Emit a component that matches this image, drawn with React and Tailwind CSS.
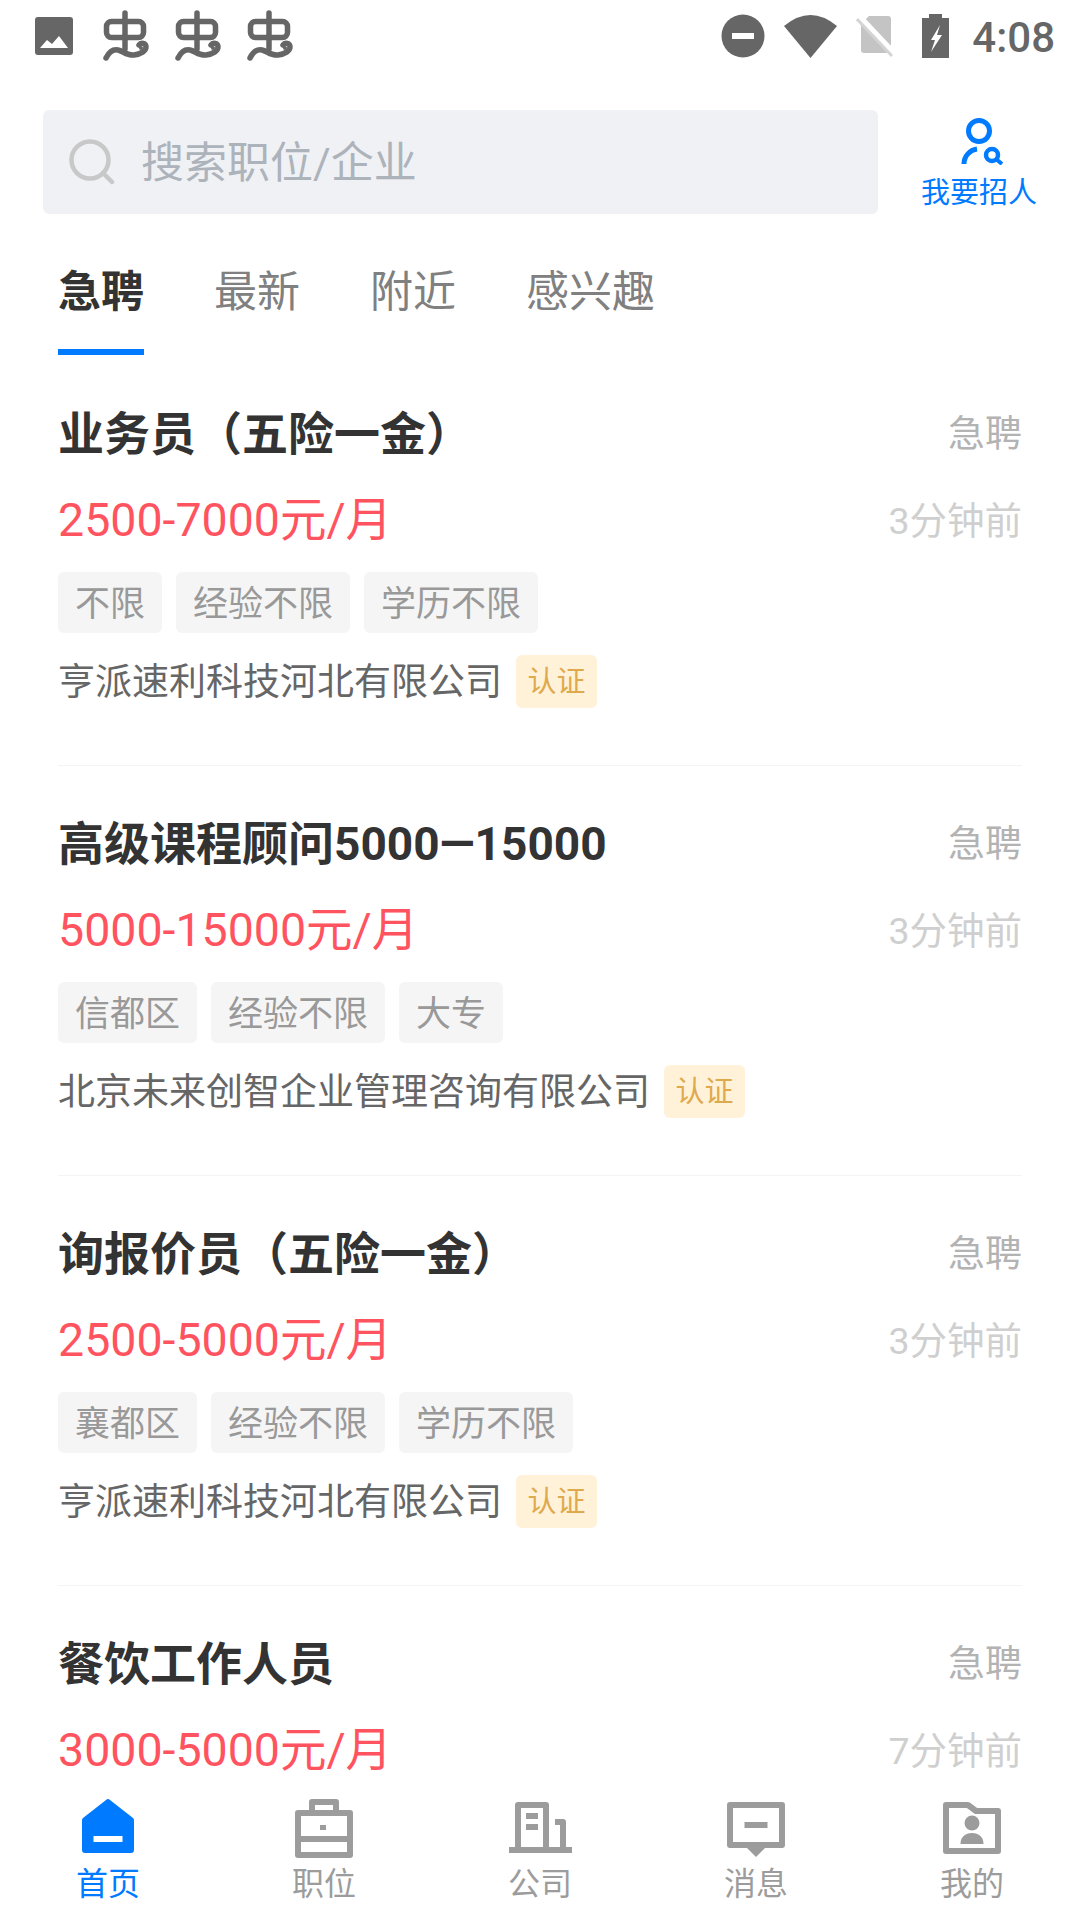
const F = { fontFamily: '"Roboto","Noto Sans CJK SC",sans-serif' };

const jobs = [
  { title: '业务员（五险一金）', salary: '2500-7000元/月', time: '3分钟前', tags: ['不限', '经验不限', '学历不限'], company: '亨派速利科技河北有限公司' },
  { title: '高级课程顾问5000—15000', salary: '5000-15000元/月', time: '3分钟前', tags: ['信都区', '经验不限', '大专'], company: '北京未来创智企业管理咨询有限公司' },
  { title: '询报价员（五险一金）', salary: '2500-5000元/月', time: '3分钟前', tags: ['襄都区', '经验不限', '学历不限'], company: '亨派速利科技河北有限公司' },
  { title: '餐饮工作人员', salary: '3000-5000元/月', time: '7分钟前', tags: [], company: '' },
];

function Bug() {
  return (
    <svg width="46" height="52" viewBox="0 0 46 52" fill="none" stroke="#666" strokeWidth="5.5" strokeLinecap="round">
      <path d="M22 3V39" />
      <rect x="3.5" y="11.5" width="37" height="16" rx="5" />
      <path d="M3 48C6 42 10 39 15 40C20 41 24 46 31 45C38 44 43 41 43 37C43 33 38 32 36 35" />
      <circle cx="38" cy="38" r="2" fill="#666" stroke="none" />
    </svg>
  );
}

function StatusBar() {
  return (
    <div className="h-[72px] shrink-0 flex items-center justify-between pl-[35px] pr-[25px]">
      <div className="flex items-center gap-[30px]">
        <svg width="38" height="38" viewBox="0 0 38 38">
          <rect width="38" height="38" rx="3" fill="#666" />
          <path d="M5 31L12 23L17 27L24 19L33 31Z" fill="#fff" />
        </svg>
        <div className="flex items-center gap-[26px]"><Bug /><Bug /><Bug /></div>
      </div>
      <div className="flex items-center">
        <svg width="44" height="44" viewBox="0 0 44 44" className="mr-[19px]">
          <circle cx="22" cy="22" r="21.5" fill="#666" />
          <rect x="11" y="19" width="22" height="6" fill="#fff" />
        </svg>
        <svg width="53" height="43" viewBox="0 0 53 43" className="mr-[19px]">
          <path d="M0 11Q26.5 -11 53 11L26.5 43Z" fill="#666" />
        </svg>
        <svg width="38" height="41" viewBox="0 0 38 41" className="mr-[28px]">
          <path d="M13 0H32a3 3 0 0 1 3 3V37H8a3 3 0 0 1-3-3V8Z" fill="#c4c4c4" />
          <path d="M3 1L38 38" stroke="#fff" strokeWidth="7" />
          <path d="M1 3L36 40" stroke="#d4d4d4" strokeWidth="3" />
        </svg>
        <svg width="27" height="44" viewBox="0 0 27 44" className="mr-[23px]">
          <path d="M7 0H20V4H27V44H0V4H7Z" fill="#666" />
          <path d="M18 11L9 26H13L9 38L20 21H15Z" fill="#fff" />
        </svg>
        <span className="text-[42px] font-medium leading-none text-[#666] mt-[4px]" style={F}>4:08</span>
      </div>
    </div>
  );
}

function SearchRow() {
  return (
    <div className="h-[104px] mt-[38px] shrink-0 flex pl-[43px]">
      <div className="w-[835px] h-[104px] rounded-[6px] bg-[#f0f1f5] flex items-center pl-[26px]">
        <svg width="46" height="46" viewBox="0 0 46 46" fill="none" stroke="#c8c8c8" strokeWidth="4.5">
          <circle cx="21" cy="21" r="18.5" />
          <path d="M34 34L43 43" strokeLinecap="round" />
        </svg>
        <span className="ml-[26px] text-[43px] leading-none text-[#adb3ba] mt-[2px]" style={F}>搜索职位/企业</span>
      </div>
      <div className="flex-1 flex flex-col items-center text-[#007aff] pt-[8px]">
        <svg width="42" height="47" viewBox="0 0 42 47" fill="none" stroke="#007aff" strokeWidth="5" className="ml-[6px]">
          <circle cx="18" cy="13" r="10.5" />
          <path d="M3 46C3 38 9 32 16 31" />
          <circle cx="31" cy="37" r="6" strokeWidth="4.5" />
          <path d="M35 41L41 46" strokeWidth="4" />
        </svg>
        <span className="text-[29px] leading-none mt-[14px] whitespace-nowrap" style={F}>我要招人</span>
      </div>
    </div>
  );
}

function Tabs() {
  const tabs = ['最新', '附近', '感兴趣'];
  return (
    <div className="h-[142px] shrink-0 flex pl-[58px] gap-[70px]">
      <div className="relative flex flex-col items-center pt-[57px]">
        <span className="text-[43px] font-bold leading-none text-[#333]" style={F}>急聘</span>
        <div className="absolute left-0 right-0 top-[135px] h-[6px] bg-[#007aff]" />
      </div>
      {tabs.map((t) => (
        <div key={t} className="pt-[57px]">
          <span className="text-[43px] leading-none text-[#808080]" style={F}>{t}</span>
        </div>
      ))}
    </div>
  );
}

function Job({ job }) {
  return (
    <div className="mx-[58px] h-[410px] shrink-0 border-b border-[#f4f4f4] pt-[48px]">
      <div className="flex items-center justify-between h-[60px]">
        <span className="text-[46px] font-bold leading-none text-[#333]" style={F}>{job.title}</span>
        <span className="text-[37px] leading-none text-[#b3b3b3]" style={F}>急聘</span>
      </div>
      <div className="flex items-center justify-between h-[60px] mt-[26px]">
        <span className="text-[46.5px] leading-none text-[#ff5460]" style={F}>{job.salary}</span>
        <span className="text-[37.5px] leading-none text-[#cfcfcf] mt-[4px]" style={F}>{job.time}</span>
      </div>
      {job.tags.length > 0 && (
        <div className="flex gap-[14px] mt-[22px]">
          {job.tags.map((t) => (
            <span key={t} className="h-[61px] px-[17px] pt-[3px] rounded-[6px] bg-[#f5f5f5] flex items-center text-[35px] leading-none text-[#999]" style={F}>{t}</span>
          ))}
        </div>
      )}
      {job.company && (
        <div className="flex items-center gap-[14px] mt-[22px]">
          <span className="text-[37px] leading-none text-[#666] mt-[2px]" style={F}>{job.company}</span>
          <span className="w-[81px] h-[53px] pt-[2px] rounded-[6px] bg-[#fff2d9] flex items-center justify-center text-[29px] leading-none text-[#dfa94d]" style={F}>认证</span>
        </div>
      )}
    </div>
  );
}

const I = '#9c9c9c';
const navs = [
  { label: '首页', active: true, top: 'pt-[9px]', icon: (
    <svg width="54" height="54" viewBox="0 0 54 54">
      <path d="M27 0Q28 0 29 1L52 19Q53 20 53 21V51Q53 54 50 54H4Q1 54 1 51V21Q1 20 2 19L25 1Q26 0 27 0Z" fill="#007aff" />
      <rect x="12.5" y="37" width="29" height="6" fill="#fff" />
    </svg>) },
  { label: '职位', top: 'pt-[8px]', icon: (
    <svg width="58" height="60" viewBox="0 0 58 60" fill="none" stroke={I} strokeWidth="6" strokeLinejoin="round">
      <rect x="3" y="15" width="52" height="42" />
      <path d="M17 15V4H41V15M3 41H55" />
      <rect x="25" y="27" width="6" height="5" fill={I} stroke="none" />
    </svg>) },
  { label: '公司', top: 'pt-[12px]', icon: (
    <svg width="63" height="51" viewBox="0 0 63 51" fill="none" stroke={I} strokeWidth="6" strokeLinejoin="round">
      <path d="M9 48V3H37V48" />
      <path d="M46 20H54V48" />
      <rect x="0" y="45" width="63" height="6" fill={I} stroke="none" />
      <rect x="17" y="11" width="12" height="6" fill={I} stroke="none" />
      <rect x="17" y="22" width="12" height="6" fill={I} stroke="none" />
    </svg>) },
  { label: '消息', top: 'pt-[12px]', icon: (
    <svg width="58" height="55" viewBox="0 0 58 55" fill="none" stroke={I} strokeWidth="6" strokeLinejoin="round">
      <rect x="3" y="3" width="52" height="40" />
      <path d="M19 45L29 55L39 45Z" fill={I} stroke="none" />
      <rect x="17.5" y="20" width="23" height="6" fill={I} stroke="none" />
    </svg>) },
  { label: '我的', top: 'pt-[12px]', icon: (
    <svg width="58" height="52" viewBox="0 0 58 52" fill="none" stroke={I} strokeWidth="6" strokeLinejoin="round">
      <path d="M3 3H25L33 9H55V49H3Z" />
      <circle cx="29" cy="21" r="7.5" fill={I} stroke="none" />
      <path d="M17.5 42C17.5 35 22 31 29 31C36 31 40.5 35 40.5 42Z" fill={I} stroke="none" />
    </svg>) },
];

function Nav() {
  return (
    <div className="h-[130px] shrink-0 bg-white grid grid-cols-5">
      {navs.map((n) => (
        <div key={n.label} className="flex flex-col items-center">
          <div className={`h-[78px] flex items-start justify-center ${n.top}`}>{n.icon}</div>
          <span className={`text-[32px] leading-none ${n.active ? 'text-[#007aff]' : 'text-[#9c9c9c]'}`} style={F}>{n.label}</span>
        </div>
      ))}
    </div>
  );
}

export default function App() {
  return (
    <div className="w-[1080px] h-[1920px] bg-white flex flex-col overflow-hidden" style={F}>
      <StatusBar />
      <SearchRow />
      <Tabs />
      <div className="flex-1 overflow-hidden flex flex-col min-h-0">
        {jobs.map((j) => <Job key={j.title} job={j} />)}
      </div>
      <Nav />
    </div>
  );
}
